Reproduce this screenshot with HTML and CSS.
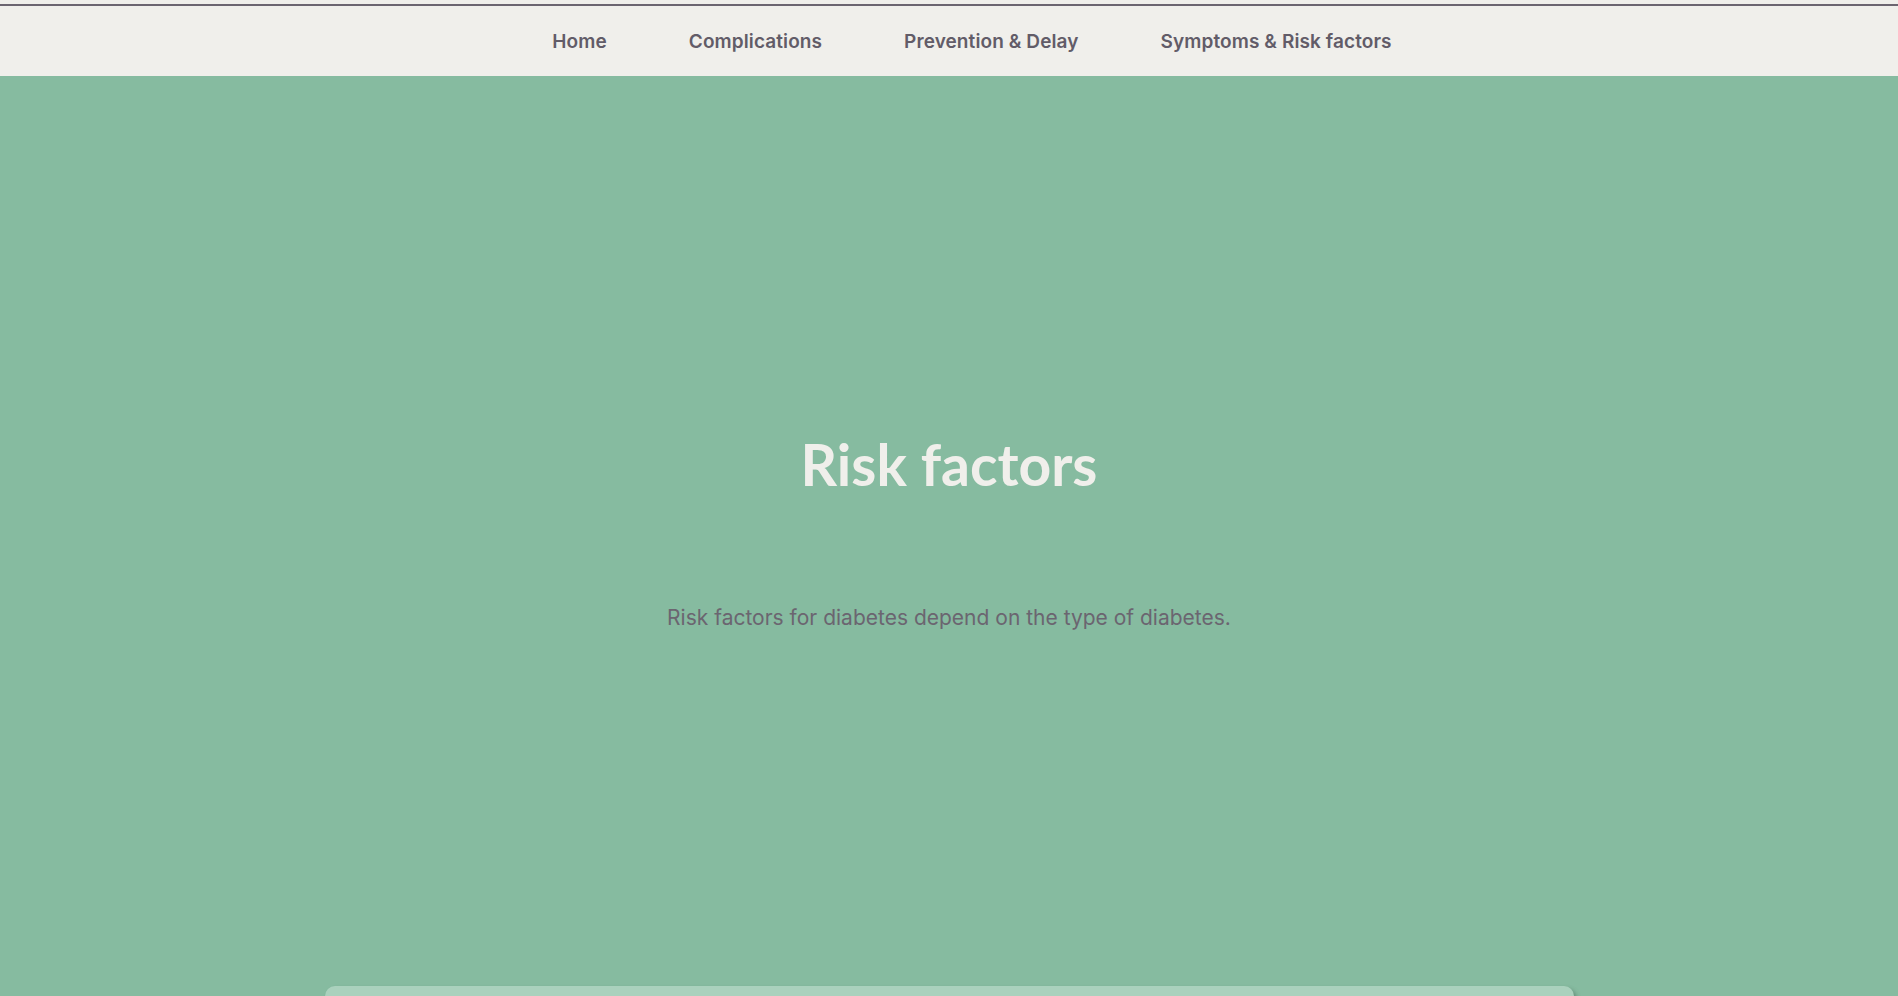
FILE: index.html
```html
<!DOCTYPE html>
<html lang="en">
<head>
<meta charset="utf-8">
<title>Risk factors</title>
<link rel="stylesheet" href="styles.css">
</head>
<body>
<header class="topbar">
  <nav class="nav">
    <ul class="nav-list">
      <li class="nav-item"><a class="nav-link" href="#">Home</a></li>
      <li class="nav-item"><a class="nav-link" href="#">Complications</a></li>
      <li class="nav-item"><a class="nav-link" href="#">Prevention &amp; Delay</a></li>
      <li class="nav-item"><a class="nav-link" href="#">Symptoms &amp; Risk factors</a></li>
    </ul>
  </nav>
</header>
<main class="hero">
  <h1 class="hero-title">Risk factors</h1>
  <p class="hero-text">Risk factors for diabetes depend on the type of diabetes.</p>
  <section class="card"></section>
</main>
</body>
</html>
```
FILE: styles.css
```css
html, body {
  margin: 0;
  padding: 0;
}
body {
  background: #86bba0;
  font-family: Inter, "Liberation Sans", sans-serif;
  overflow: hidden;
  height: 996px;
}
.topbar {
  background: #f0efeb;
  padding-top: 4px;
}
.nav {
  border-top: 2px solid #6b6570;
  height: 70px;
  display: flex;
  align-items: center;
  justify-content: center;
}
.nav-list {
  list-style: none;
  margin: 0;
  padding: 0 0 0 46px;
  display: flex;
  gap: 82px;
}
.nav-link {
  text-decoration: none;
  color: #625c68;
  font-weight: 600;
  font-size: 19px;
  letter-spacing: 0.1px;
}
.hero {
  display: flex;
  flex-direction: column;
  align-items: center;
  padding-top: 420px;
}
.hero-title {
  margin: 0;
  font-family: Lato, "Open Sans", sans-serif;
  font-weight: 700;
  font-size: 57px;
  line-height: 60px;
  color: #f0efeb;
  margin-top: -62px;
}
.hero-text {
  margin: 111px 0 0;
  font-size: 21px;
  color: #6b6570;
}
.card {
  margin-top: 356px;
  width: 1249px;
  height: 10px;
  background: #aad1bd;
  border-radius: 10px 10px 0 0;
  box-shadow: 3px 3px 4px rgba(60, 90, 75, 0.45);
}
```
